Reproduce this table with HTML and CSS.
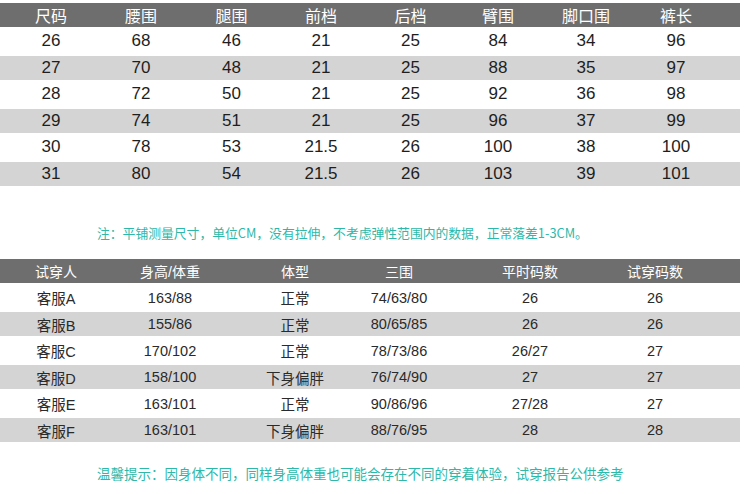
FILE: index.html
```html
<!DOCTYPE html>
<html lang="zh">
<head>
<meta charset="utf-8">
<link rel="stylesheet" href="styles.css">
</head>
<body>
<div class="page">
  <div class="tbl size">
    <div class="row head"><span>尺码</span><span>腰围</span><span>腿围</span><span>前档</span><span>后档</span><span>臂围</span><span>脚口围</span><span>裤长</span></div>
    <div class="row"><span>26</span><span>68</span><span>46</span><span>21</span><span>25</span><span>84</span><span>34</span><span>96</span></div>
    <div class="row alt"><span>27</span><span>70</span><span>48</span><span>21</span><span>25</span><span>88</span><span>35</span><span>97</span></div>
    <div class="row"><span>28</span><span>72</span><span>50</span><span>21</span><span>25</span><span>92</span><span>36</span><span>98</span></div>
    <div class="row alt"><span>29</span><span>74</span><span>51</span><span>21</span><span>25</span><span>96</span><span>37</span><span>99</span></div>
    <div class="row"><span>30</span><span>78</span><span>53</span><span>21.5</span><span>26</span><span>100</span><span>38</span><span>100</span></div>
    <div class="row alt"><span>31</span><span>80</span><span>54</span><span>21.5</span><span>26</span><span>103</span><span>39</span><span>101</span></div>
  </div>
  <p class="note first">注：平铺测量尺寸，单位CM，没有拉伸，不考虑弹性范围内的数据，正常落差1-3CM。</p>
  <div class="tbl try">
    <div class="row head"><span>试穿人</span><span>身高/体重</span><span>体型</span><span>三围</span><span>平时码数</span><span>试穿码数</span></div>
    <div class="row"><span>客服A</span><span>163/88</span><span>正常</span><span>74/63/80</span><span>26</span><span>26</span></div>
    <div class="row alt"><span>客服B</span><span>155/86</span><span>正常</span><span>80/65/85</span><span>26</span><span>26</span></div>
    <div class="row"><span>客服C</span><span>170/102</span><span>正常</span><span>78/73/86</span><span>26/27</span><span>27</span></div>
    <div class="row alt"><span>客服D</span><span>158/100</span><span>下身偏胖</span><span>76/74/90</span><span>27</span><span>27</span></div>
    <div class="row"><span>客服E</span><span>163/101</span><span>正常</span><span>90/86/96</span><span>27/28</span><span>27</span></div>
    <div class="row alt"><span>客服F</span><span>163/101</span><span>下身偏胖</span><span>88/76/95</span><span>28</span><span>28</span></div>
  </div>
  <p class="note last">温馨提示：因身体不同，同样身高体重也可能会存在不同的穿着体验，试穿报告公供参考</p>
</div>
</body>
</html>
```
FILE: styles.css
```css
html, body {
  margin: 0;
  padding: 0;
  background: #ffffff;
}
.page {
  width: 750px;
  font-family: "Liberation Sans", "Noto Sans CJK SC", sans-serif;
}
.tbl {
  width: 740px;
}
.row {
  display: grid;
  height: 24px;
  margin-top: 2.5px;
  align-items: center;
  justify-items: center;
  white-space: nowrap;
}
.row.head {
  background: #6e6e6e;
  color: #ffffff;
}
.row.alt {
  background: #d4d4d4;
}
.size .row {
  padding-left: 6px;
  grid-template-columns: 90px 90px 91px 88px 91px 84px 92px 88px;
  font-size: 17px;
  color: #1e1e1e;
}
.size .row.head {
  font-size: 16px;
  color: #ffffff;
}
.try .row {
  grid-template-columns: 112px 116px 134px 74px 188px 62px;
  font-size: 14.5px;
  color: #2a2a2a;
}
.try .row.head {
  font-size: 14px;
  color: #ffffff;
}
.note {
  margin: 0;
  padding-left: 97px;
  height: 20px;
  line-height: 20px;
  color: #2db8a9;
  font-family: "Noto Sans CJK SC", sans-serif;
  white-space: nowrap;
}
.note.first {
  margin-top: 37.5px;
  margin-bottom: 16px;
  font-size: 12.8px;
}
.note.last {
  margin-top: 20.5px;
  font-size: 13.5px;
}
```
